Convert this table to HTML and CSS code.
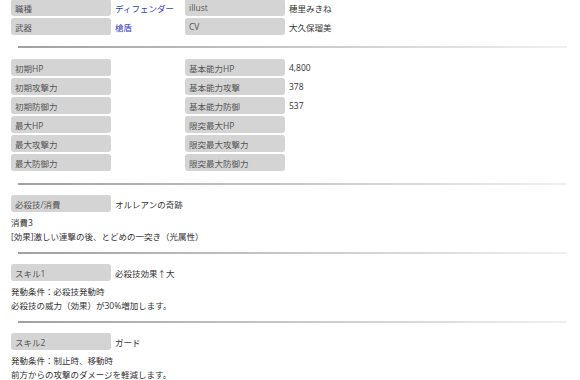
FILE: index.html
```html
<!DOCTYPE html>
<html lang="ja">
<head>
    <meta charset="UTF-8">
    <meta name="viewport" content="width=device-width, initial-scale=1.0">
    <title>キャラクター詳細</title>
    <link rel="stylesheet" href="styles.css">
</head>
<body>

    <div class="page">
        <div class="info-grid first">
            <div class="label">職種</div>
            <div class="value link">ディフェンダー</div>
            <div class="label">illust</div>
            <div class="value">穂里みきね</div>
            <div class="label">武器</div>
            <div class="value link">槍盾</div>
            <div class="label">CV</div>
            <div class="value">大久保瑠美</div>
        </div>

        <div class="divider"></div>

        <div class="info-grid stats">
            <div class="label">初期HP</div>
            <div class="value"></div>
            <div class="label">基本能力HP</div>
            <div class="value">4,800</div>
            <div class="label">初期攻撃力</div>
            <div class="value"></div>
            <div class="label">基本能力攻撃</div>
            <div class="value">378</div>
            <div class="label">初期防御力</div>
            <div class="value"></div>
            <div class="label">基本能力防御</div>
            <div class="value">537</div>
            <div class="label">最大HP</div>
            <div class="value"></div>
            <div class="label">限突最大HP</div>
            <div class="value"></div>
            <div class="label">最大攻撃力</div>
            <div class="value"></div>
            <div class="label">限突最大攻撃力</div>
            <div class="value"></div>
            <div class="label">最大防御力</div>
            <div class="value"></div>
            <div class="label">限突最大防御力</div>
            <div class="value"></div>
        </div>

        <div class="divider wide"></div>

        <div class="skill">
            <div class="skill-head">
                <div class="label">必殺技/消費</div>
                <div class="value">オルレアンの奇跡</div>
            </div>
            <div class="skill-text">
                消費3<br>
                [効果]激しい連撃の後、とどめの一突き（光属性）
            </div>
        </div>

        <div class="divider"></div>

        <div class="skill">
            <div class="skill-head">
                <div class="label">スキル1</div>
                <div class="value">必殺技効果↑大</div>
            </div>
            <div class="skill-text">
                発動条件：必殺技発動時<br>
                必殺技の威力（効果）が30%増加します。
            </div>
        </div>

        <div class="divider"></div>

        <div class="skill">
            <div class="skill-head">
                <div class="label">スキル2</div>
                <div class="value">ガード</div>
            </div>
            <div class="skill-text">
                発動条件：制止時、移動時<br>
                前方からの攻撃のダメージを軽減します。
            </div>
        </div>
    </div>

</body>
</html>
```

FILE: styles.css
```css
body {
    margin: 0;
    font-family: "Open Sans", "Noto Sans CJK JP", sans-serif;
    font-size: 8.5px;
    color: #333333;
    background-color: #ffffff;
    overflow: hidden;
}

.page {
    padding: 0 11px;
}

.info-grid {
    display: grid;
    grid-template-columns: 100px 70px 100px 1fr;
    grid-auto-rows: 17px;
    gap: 2px;
}

.info-grid.first {
    margin-top: -1px;
}

.info-grid.stats {
    margin-top: 11px;
}

.label {
    background-color: #d4d4d4;
    color: #555555;
    border-radius: 3px;
    padding-left: 4px;
    display: flex;
    align-items: center;
}

.value {
    padding-left: 2px;
    display: flex;
    align-items: center;
}

.link {
    color: #3b3bc9;
}

/* thin rule that fades out to the right */
.divider {
    height: 2px;
    margin: 11px 2px 0 7px;
    background: linear-gradient(to right, #a0a0a0, #f0f0f0);
}

.divider.wide {
    margin-top: 12px;
}

.skill {
    margin-top: 10px;
    margin-bottom: 9px;
}

.skill + .divider {
    margin-top: 0;
}

.skill-head {
    display: grid;
    grid-template-columns: 100px 1fr;
    grid-auto-rows: 17px;
    gap: 2px;
}

.skill-text {
    margin-top: 4px;
    line-height: 13.5px;
}
```
